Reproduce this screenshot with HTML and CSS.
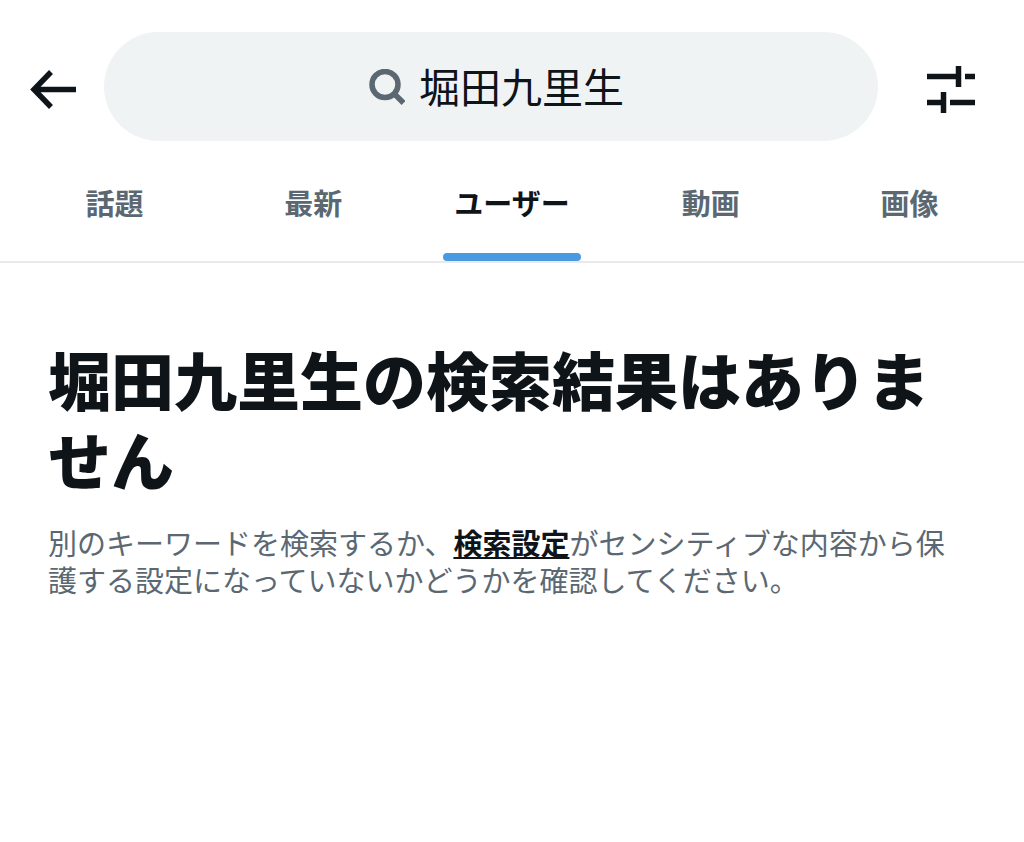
FILE: index.html
```html
<!DOCTYPE html>
<html lang="ja">
<head>
<meta charset="utf-8">
<meta name="viewport" content="width=device-width, initial-scale=1">
<title>堀田九里生 - 検索</title>
<link rel="stylesheet" href="styles.css">
</head>
<body>
<header class="topbar">
  <button class="icon-button back" type="button" aria-label="戻る">
    <svg width="48" height="40" viewBox="0 0 48 40" fill="none" stroke="currentColor" stroke-width="5.500"><path d="M23 2 6 19.500l17 17.500M6 19.500h42"/></svg>
  </button>
  <form class="search" role="search">
    <svg class="search-icon" width="36" height="36" viewBox="0 0 36 36" fill="none" stroke="currentColor" stroke-width="5.500"><circle cx="16" cy="15.500" r="13"/><path d="m25 24.500 9.500 9.500"/></svg>
    <input class="search-input" type="text" aria-label="検索" value="堀田九里生">
  </form>
  <button class="icon-button filter" type="button" aria-label="検索フィルター">
    <svg width="48" height="48" viewBox="0 0 48 48" fill="none" stroke="currentColor" stroke-width="5.500"><path d="M0 10.500h31M38 10.500h10M31.500 0v21M0 36.500h16M23 36.500h25M16.500 26v21"/></svg>
  </button>
</header>
<nav class="tabs">
  <a class="tab" href="#top">話題</a>
  <a class="tab" href="#latest">最新</a>
  <a class="tab active" href="#users" aria-current="page">ユーザー</a>
  <a class="tab" href="#videos">動画</a>
  <a class="tab" href="#photos">画像</a>
</nav>
<main class="empty">
  <h1 class="title">堀田九里生の検索結果はありません</h1>
  <p class="message">別のキーワードを検索するか、<a class="settings" href="#settings">検索設定</a>がセンシティブな内容から保護する設定になっていないかどうかを確認してください。</p>
</main>
</body>
</html>
```
FILE: styles.css
```css
* { box-sizing: border-box; }
body {
  margin: 0;
  background: #fff;
  color: #0f1419;
  font-family: "Noto Sans CJK JP", sans-serif;
}
.topbar {
  display: flex;
  align-items: center;
  gap: 28px;
  padding: 32px 49px 0 28px;
}
.icon-button {
  display: flex;
  flex: none;
  padding: 6px 0 0;
  border: 0;
  background: none;
  color: #0f1419;
}
.filter { margin-left: 21px; }
.search {
  display: flex;
  flex: 1;
  align-items: center;
  justify-content: center;
  gap: 14px;
  height: 109px;
  padding-left: 12px;
  border-radius: 55px;
  background: #eff3f4;
}
.search-icon { color: #5b6872; }
.search-input {
  width: 206px;
  padding: 0 0 4px;
  border: 0;
  outline: 0;
  background: none;
  color: #0f1419;
  font: inherit;
  font-size: 41px;
}
.tabs {
  display: flex;
  height: 122px;
  padding: 0 15px;
  border-bottom: 2px solid #e8eaeb;
}
.tab {
  position: relative;
  flex: 1;
  padding-top: 39px;
  color: #5b6872;
  font-size: 29px;
  font-weight: 700;
  line-height: 44px;
  text-align: center;
  text-decoration: none;
}
.active { color: #0f1419; }
.active::after {
  content: "";
  position: absolute;
  bottom: 0;
  left: 50%;
  width: 138px;
  height: 8px;
  margin-left: -69px;
  border-radius: 4px;
  background: #4a99e3;
}
.empty { padding: 75px 64px 80px 48px; }
.title {
  margin: 0;
  font-size: 63px;
  font-weight: 900;
  line-height: 80px;
}
.message {
  margin: 26px 0 0;
  color: #5b6872;
  font-size: 29px;
  line-height: 37px;
}
.settings {
  color: #0f1419;
  font-weight: 700;
  text-decoration: underline;
}
```
